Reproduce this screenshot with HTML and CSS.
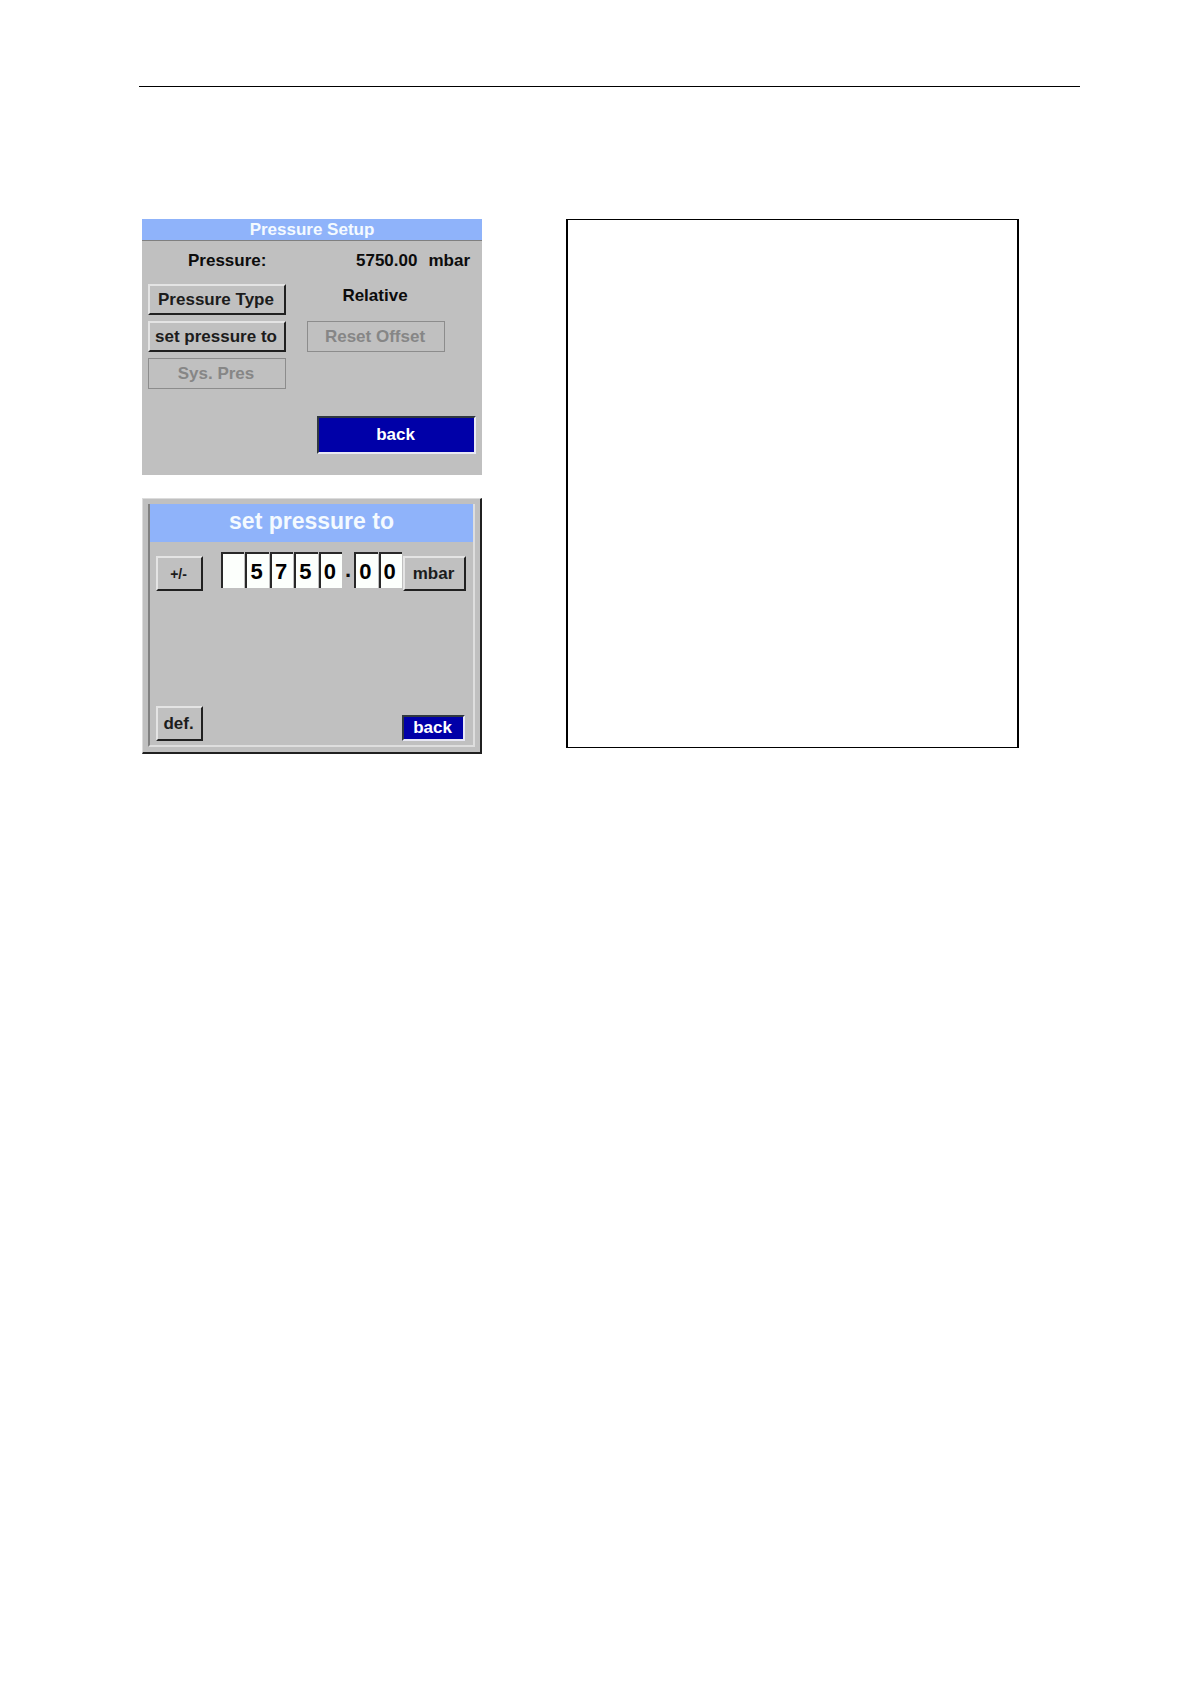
FILE: index.html
```html
<!DOCTYPE html>
<html lang="en">
<head>
    <meta charset="UTF-8">
    <meta name="viewport" content="width=device-width, initial-scale=1.0">
    <title>Pressure Setup</title>
    <link rel="stylesheet" href="styles.css">
</head>
<body>
<hr class="rule">

<main class="content">
    <div class="screens">
        <!-- Pressure Setup -->
        <section class="screen">
            <h1 class="screen-title">Pressure Setup</h1>
            <div class="screen-body">
                <div class="reading">
                    <span>Pressure:</span>
                    <span class="value">5750.00</span>
                    <span>mbar</span>
                </div>
                <div class="options">
                    <button type="button">Pressure Type</button>
                    <span class="option-value">Relative</span>
                    <button type="button">set pressure to</button>
                    <button type="button" disabled>Reset Offset</button>
                    <button type="button" disabled>Sys. Pres</button>
                </div>
                <button type="button" class="back back-wide">back</button>
            </div>
        </section>

        <!-- Value entry -->
        <section class="dialog">
            <div class="dialog-inner">
                <h2 class="dialog-title">set pressure to</h2>
                <div class="entry">
                    <button type="button" class="key key-sign">+/-</button>
                    <div class="digits">
                        <input type="text" maxlength="1" value="" aria-label="Ten thousands">
                        <input type="text" maxlength="1" value="5" aria-label="Thousands">
                        <input type="text" maxlength="1" value="7" aria-label="Hundreds">
                        <input type="text" maxlength="1" value="5" aria-label="Tens">
                        <input type="text" maxlength="1" value="0" aria-label="Ones">
                        <span class="point">.</span>
                        <input type="text" maxlength="1" value="0" aria-label="Tenths">
                        <input type="text" maxlength="1" value="0" aria-label="Hundredths">
                    </div>
                    <button type="button" class="key key-unit">mbar</button>
                </div>
                <div class="dialog-footer">
                    <button type="button" class="key">def.</button>
                    <button type="button" class="back back-small">back</button>
                </div>
            </div>
        </section>
    </div>

    <div class="note"></div>
</main>
</body>
</html>
```

FILE: styles.css
```css
:root {
    --face: #c0c0c0;
    --title: #8fb3fa;
    --light: #e4e4e4;
    --dark: #202020;
    --shade: #808080;
    --blue: #0000a8;
}
* { box-sizing: border-box; }
body {
    margin: 0;
    padding: 86px 111px 86px 139px;
    background: #fff;
    color: #0c0c0c;
    font-family: "Liberation Sans", Arial, Helvetica, sans-serif;
    font-size: 17px;
    font-weight: bold;
}
.rule {
    margin: 0;
    border: 0;
    border-top: 1px solid #000;
}
.content {
    display: grid;
    grid-template-columns: minmax(0, 340fr) minmax(0, 453fr);
    gap: 84px;
    padding: 132px 61px 0 3px;
}
.screens {
    display: flex;
    flex-direction: column;
    gap: 23px;
}
h1, h2 {
    margin: 0;
    background: var(--title);
    color: #f4faff;
    text-align: center;
}

/* Buttons */
button {
    padding: 0 2px 0 0;
    height: 31px;
    font: inherit;
    color: #1c1c1c;
    background: var(--face);
    border: 2px solid;
    border-color: var(--light) var(--dark) var(--dark) var(--light);
}
button:disabled {
    color: #868686;
    border: 1px solid #8c8c8c;
}
.back {
    color: #fff;
    background: var(--blue);
    border-color: #303840 #e8e8f4 #e8e8f4 #303840;
}
.back-wide {
    align-self: flex-end;
    width: 159px;
    height: 38px;
    margin-top: 27px;
}
.back-small {
    width: 63px;
    height: 26px;
}

/* Pressure Setup */
.screen { background: var(--face); }
.screen-title {
    font-size: 17px;
    line-height: 21px;
    border-bottom: 1px solid var(--shade);
}
.screen-body {
    display: flex;
    flex-direction: column;
    padding: 0 6px 21px;
}
.reading {
    display: flex;
    gap: 11px;
    padding: 0 6px 0 40px;
    line-height: 40px;
}
.reading .value { margin-left: auto; }
.options {
    display: grid;
    grid-template-columns: 1fr 1fr;
    gap: 6px 21px;
    margin-top: 3px;
    padding-right: 31px;
}
.option-value {
    padding-right: 2px;
    line-height: 24px;
    text-align: center;
}

/* Value entry */
.dialog {
    padding: 5px 5px 5px 5px;
    background: var(--face);
    border: solid;
    border-width: 1px 2px 2px 1px;
    border-color: #dcdcdc var(--dark) var(--dark) #dcdcdc;
}
.dialog-inner {
    border: solid;
    border-width: 0 2px 2px;
    border-color: var(--shade) #dedede #dedede var(--shade);
}
.dialog-title {
    font-size: 23px;
    line-height: 34px;
    padding-bottom: 4px;
}
.entry {
    display: flex;
    align-items: flex-end;
    padding: 10px 7px 0 6px;
}
.key {
    width: 47px;
    height: 35px;
}
.key-sign { font-size: 14px; }
.key-unit { width: 63px; }
.digits {
    flex: 1;
    min-width: 0;
    display: flex;
    gap: 1px;
    margin: 0 1px 3px 18px;
}
.digits input {
    flex: 1;
    min-width: 0;
    height: 36px;
    padding: 2px 3px 0 0;
    font: inherit;
    font-size: 22px;
    text-align: center;
    color: #000;
    background: #fcfffc;
    border: 0 solid #282828;
    border-width: 2px 0 0 2px;
    border-radius: 0;
}
.point {
    width: 10px;
    font-size: 22px;
    line-height: 36px;
    text-align: center;
}
.dialog-footer {
    display: flex;
    justify-content: space-between;
    align-items: flex-end;
    margin-top: 115px;
    padding: 0 8px 4px 6px;
}

/* Empty frame beside the screens */
.note {
    margin-bottom: 6px;
    border: solid #000;
    border-width: 1px 2px;
}
```
